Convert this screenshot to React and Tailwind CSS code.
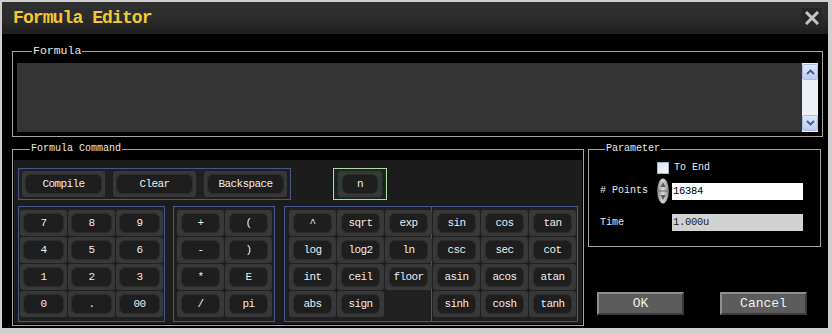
import React from "react";

const F = "font-['Liberation_Mono',monospace]";

function Key({ label, w = "w-[47px]", ix = "px-[3px]" }) {
  return (
    <div className={`${w} h-[26px] bg-[#383838] rounded-[3px] py-[3px] ${ix} flex`}>
      <div className="flex-1 rounded-[6px] bg-[#1e1e1e] border border-[#2c2c2c] flex items-center justify-center text-[11px] leading-none text-[#ececec] tracking-[-0.6px]">
        {label}
      </div>
    </div>
  );
}

function Empty() {
  return <div className="w-[47px] h-[26px]" />;
}

function Chevron({ up }) {
  return (
    <svg width="9" height="6" viewBox="0 0 9 6">
      <path
        d={up ? "M1 5 L4.5 1.5 L8 5" : "M1 1 L4.5 4.5 L8 1"}
        fill="none"
        stroke="#3b5c9c"
        strokeWidth="1.8"
      />
    </svg>
  );
}

export default function App() {
  const nums = ["7", "8", "9", "4", "5", "6", "1", "2", "3", "0", ".", "00"];
  const ops = ["+", "(", "-", ")", "*", "E", "/", "pi"];
  const funcs = ["^", "sqrt", "exp", "log", "log2", "ln", "int", "ceil", "floor", "abs", "sign", null];
  const trig = ["sin", "cos", "tan", "csc", "sec", "cot", "asin", "acos", "atan", "sinh", "cosh", "tanh"];

  return (
    <div className={`w-[832px] h-[334px] bg-[#d0d0d0] pt-[2px] pl-[2px] pr-[4px] pb-[6px] ${F}`}>
      <div className="w-full h-full bg-black flex flex-col overflow-hidden">
        {/* Title bar */}
        <div className="h-[32px] shrink-0 bg-gradient-to-b from-[#303030] via-[#2c2c2c] to-[#1e1e1e] flex items-center pl-[11px] pr-[6px]">
          <div className="text-[18px] font-bold text-[#f2c832] tracking-[-0.9px] leading-none">Formula Editor</div>
          <div className="ml-auto w-[20px] h-[20px] bg-[#262626] flex items-center justify-center">
            <svg width="16" height="14" viewBox="0 0 16 14">
              <path d="M2 1 L14 13 M14 1 L2 13" stroke="#c4c4c4" strokeWidth="3" />
            </svg>
          </div>
        </div>

        {/* Formula group */}
        <fieldset className="mt-[10px] ml-[10px] w-[811px] border border-[#a4a4a4] px-[4px] pt-[5px] pb-[4px]">
          <legend className="ml-[15px] px-[1px] text-[11.5px] leading-[14px] text-[#e8e8e8]">Formula</legend>
          <div className="h-[69px] bg-[#333333] flex justify-end">
            <div className="w-[16px] h-full bg-[#eef0f6] flex flex-col justify-between py-[1px]">
              <div className="h-[16px] rounded-[2px] border border-[#a9bde6] bg-gradient-to-b from-[#dfe8fb] to-[#bccdf2] flex items-center justify-center">
                <Chevron up />
              </div>
              <div className="h-[16px] rounded-[2px] border border-[#a9bde6] bg-gradient-to-b from-[#dfe8fb] to-[#bccdf2] flex items-center justify-center">
                <Chevron />
              </div>
            </div>
          </div>
        </fieldset>

        <div className="flex mt-[6px] ml-[10px]">
          {/* Formula Command group */}
          <fieldset className="w-[572px] border border-[#a4a4a4] px-[1px] pt-[5px] pb-[1px]">
            <legend className="ml-[16px] px-[1px] text-[10px] leading-[12px] text-[#e8e8e8]">Formula Command</legend>
            <div className="h-[164px] bg-[#1c1c1c] pt-[8px] pl-[4px]">
              <div className="flex">
                <div className="w-[273px] h-[32px] border border-[#48558a] bg-[#202020] flex items-center justify-between px-[3px]">
                  <Key label="Compile" w="w-[83px]" />
                  <Key label="Clear" w="w-[83px]" />
                  <Key label="Backspace" w="w-[83px]" />
                </div>
                <div className="ml-[42px] w-[54px] h-[32px] border border-[#b4d4ac] bg-[#1a2a1a] flex items-center justify-center">
                  <Key label="n" w="w-[44px]" ix="px-[4px]" />
                </div>
              </div>
              <div className="flex mt-[6px]">
                <div className="w-[147px] h-[116px] border border-[#48558a] bg-[#202020] pt-[3px] pl-[1px]">
                  <div className="grid grid-cols-[repeat(3,47px)] gap-[1px]">
                    {nums.map((n) => (
                      <Key key={n} label={n} />
                    ))}
                  </div>
                </div>
                <div className="ml-[8px] w-[102px] h-[116px] border border-[#48558a] bg-[#202020] pt-[3px] pl-[3px]">
                  <div className="grid grid-cols-[repeat(2,47px)] gap-[1px]">
                    {ops.map((n) => (
                      <Key key={n} label={n} ix="px-[4px]" />
                    ))}
                  </div>
                </div>
                <div className="ml-[9px] w-[148px] h-[116px] border border-[#48558a] bg-[#202020] pt-[3px] pl-[4px]">
                  <div className="grid grid-cols-[repeat(3,47px)] gap-[1px]">
                    {funcs.map((n, i) =>
                      n ? <Key key={i} label={n} ix="px-[4px]" /> : <Empty key={i} />
                    )}
                  </div>
                </div>
                <div className="w-[146px] h-[116px] border border-l-0 border-[#48558a] bg-[#202020] pt-[3px] pl-[1px]">
                  <div className="grid grid-cols-[repeat(3,47px)] gap-[1px]">
                    {trig.map((n) => (
                      <Key key={n} label={n} ix="px-[4px]" />
                    ))}
                  </div>
                </div>
              </div>
            </div>
          </fieldset>

          {/* Right column */}
          <div className="ml-[4px] w-[233px] flex flex-col">
            <fieldset className="w-[233px] border border-[#a4a4a4] pt-[7px] pb-[15px]">
              <legend className="ml-[16px] px-[1px] text-[10px] leading-[12px] text-[#e8e8e8]">Parameter</legend>
              <div className="h-[12px] flex items-center pl-[68px]">
                <div className="w-[12px] h-[12px] border border-[#9fb3d1] bg-gradient-to-br from-[#dde6f2] to-[#f6f8fb]" />
                <span className="ml-[5px] text-[10px] text-[#e8e8e8] leading-none">To End</span>
              </div>
              <div className="mt-[4px] h-[26px] flex items-center">
                <span className="w-[68px] pl-[11px] text-[10px] text-[#e8e8e8] leading-none">
                  # Points
                </span>
                <svg width="12" height="26" viewBox="0 0 12 26">
                  <defs>
                    <linearGradient id="sp" x1="0" x2="1" y1="0" y2="0">
                      <stop offset="0" stopColor="#8c8c8c" />
                      <stop offset="0.5" stopColor="#d8d8d8" />
                      <stop offset="1" stopColor="#8c8c8c" />
                    </linearGradient>
                  </defs>
                  <ellipse cx="6" cy="13" rx="5.8" ry="12.5" fill="url(#sp)" />
                  <line x1="1" y1="13" x2="11" y2="13" stroke="#6a6a6a" strokeWidth="1" />
                  <path d="M6 4 L8.5 9 L3.5 9 Z" fill="#5a5a5a" />
                  <path d="M6 22 L8.5 17 L3.5 17 Z" fill="#5a5a5a" />
                </svg>
                <div className="ml-[3px] w-[131px] h-[17px] bg-white flex items-center pl-[1px] text-[10.5px] text-black leading-none tracking-[-0.3px]">
                  16384
                </div>
              </div>
              <div className="mt-[10px] h-[17px] flex items-center">
                <span className="w-[83px] pl-[11px] text-[10px] text-[#e8e8e8] leading-none">Time</span>
                <div className="w-[131px] h-[17px] bg-[#d2d2d2] flex items-center pl-[1px] text-[10.5px] text-[#1e1e1e] leading-none tracking-[-0.3px]">
                  1.000u
                </div>
              </div>
            </fieldset>
            <div className="mt-[45px] pl-[9px] flex gap-[36px]">
              <div className="w-[87px] h-[23px] bg-[#5c5c5c] border-t-2 border-l-2 border-[#8e8e8e] border-r-2 border-b-2 border-r-[#3a3a3a] border-b-[#3a3a3a] flex items-center justify-center text-[13px] text-[#f0f0f0] leading-none">
                OK
              </div>
              <div className="w-[87px] h-[23px] bg-[#5c5c5c] border-t-2 border-l-2 border-[#8e8e8e] border-r-2 border-b-2 border-r-[#3a3a3a] border-b-[#3a3a3a] flex items-center justify-center text-[13px] text-[#f0f0f0] leading-none">
                Cancel
              </div>
            </div>
          </div>
        </div>
      </div>
    </div>
  );
}
